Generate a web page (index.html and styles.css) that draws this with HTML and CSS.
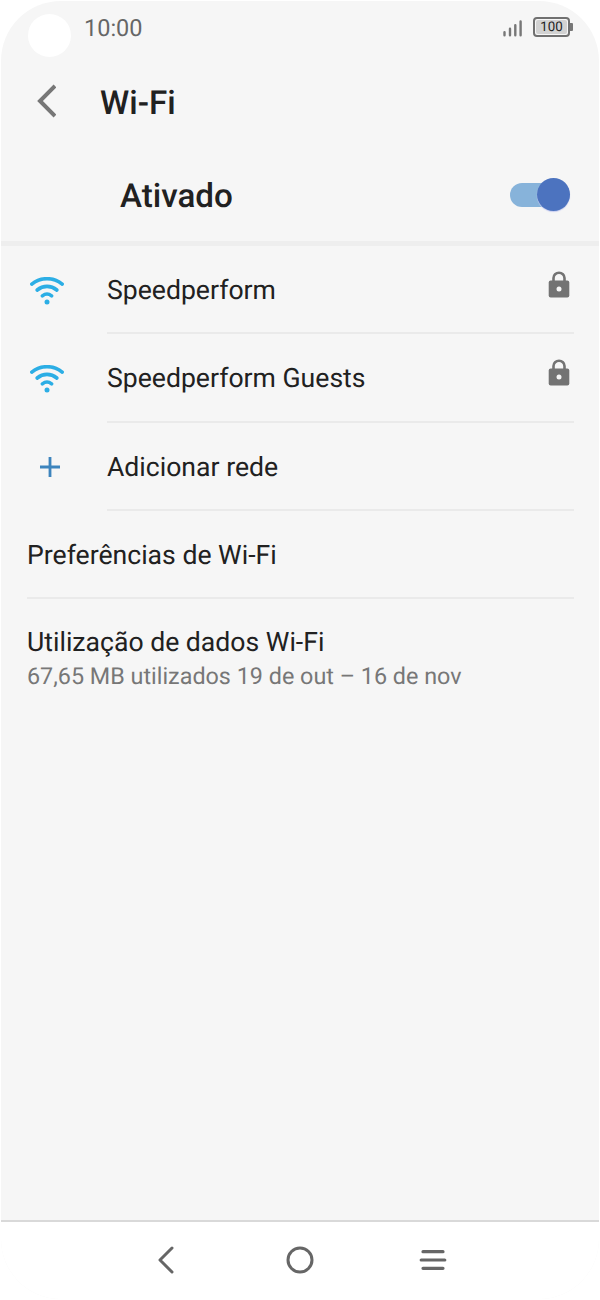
FILE: index.html
```html
<!DOCTYPE html>
<html lang="pt">
<head>
<meta charset="utf-8">
<title>Wi-Fi</title>
<link rel="stylesheet" href="styles.css">
</head>
<body>
<div class="phone">
  <header class="status">
    <span class="camera"></span>
    <span class="clock">10:00</span>
    <svg class="signal" width="20" height="18" viewBox="0 0 20 18" fill="none" stroke="#777" stroke-width="2.4" stroke-linecap="round"><path d="M1.500 12.300V15.300M7 8.800V15.300M12.300 5.300V15.300M17.600 1.500V15.300"/></svg>
    <span class="battery"><span class="charge">100</span></span>
  </header>
  <div class="titlebar">
    <svg class="back" width="20" height="34" viewBox="0 0 20 34" fill="none" stroke="#777" stroke-width="4"><path d="M19 2 4 17 19 32"/></svg>
    <h1 class="title">Wi-Fi</h1>
  </div>
  <div class="master">
    <span class="title">Ativado</span>
    <span class="switch"><span class="thumb"></span></span>
  </div>
  <main class="list">
    <div class="row">
      <svg class="wifi" width="34" height="28" viewBox="0 0 34 28" fill="none" stroke="#2caee5" stroke-width="3.6" stroke-linecap="round"><path d="M1.8 7.1C10.6-.1 23.4-.1 32.2 7.1M7.2 13C13 8.2 21 8.2 26.800 13M12.400 18.800C15.200 16.600 18.800 16.600 21.600 18.800"/><circle cx="17" cy="25" r="2.500" fill="#2caee5" stroke="none"/></svg>
      <div class="cell"><span class="label">Speedperform</span>
        <svg class="lock" width="22" height="28" viewBox="0 0 22 28"><path d="M5.500 11V7a5.500 5.300 0 0 1 11 0v4" fill="none" stroke="#737373" stroke-width="2.600"/><rect x=".7" y="9.500" width="20.600" height="17" rx="2" fill="#737373"/><circle cx="11" cy="18" r="2.500" fill="#f6f6f6"/></svg>
      </div>
    </div>
    <div class="row">
      <svg class="wifi" width="34" height="28" viewBox="0 0 34 28" fill="none" stroke="#2caee5" stroke-width="3.6" stroke-linecap="round"><path d="M1.8 7.1C10.6-.1 23.4-.1 32.2 7.1M7.2 13C13 8.2 21 8.2 26.800 13M12.400 18.800C15.200 16.600 18.800 16.600 21.600 18.800"/><circle cx="17" cy="25" r="2.500" fill="#2caee5" stroke="none"/></svg>
      <div class="cell"><span class="label">Speedperform Guests</span>
        <svg class="lock" width="22" height="28" viewBox="0 0 22 28"><path d="M5.500 11V7a5.500 5.300 0 0 1 11 0v4" fill="none" stroke="#737373" stroke-width="2.600"/><rect x=".7" y="9.500" width="20.600" height="17" rx="2" fill="#737373"/><circle cx="11" cy="18" r="2.500" fill="#f6f6f6"/></svg>
      </div>
    </div>
    <div class="row">
      <svg class="plus" width="20" height="20" viewBox="0 0 20 20" stroke="#3d84bd" stroke-width="2.800"><path d="M10 0V20M0 10H20"/></svg>
      <div class="cell"><span class="label">Adicionar rede</span></div>
    </div>
    <div class="row wide">
      <div class="cell"><span class="label">Preferências de Wi-Fi</span></div>
    </div>
    <div class="usage">
      <span class="label">Utilização de dados Wi-Fi</span>
      <span class="detail">67,65 MB utilizados 19 de out – 16 de nov</span>
    </div>
  </main>
  <nav class="nav">
    <svg width="28" height="28" viewBox="0 0 28 28" fill="none" stroke="#666" stroke-width="3" stroke-linecap="round" stroke-linejoin="round"><path d="M19 2 7 14 19 26"/></svg>
    <svg width="28" height="28" viewBox="0 0 28 28" fill="none" stroke="#666" stroke-width="3"><circle cx="14" cy="14" r="12"/></svg>
    <svg width="28" height="28" viewBox="0 0 28 28" fill="none" stroke="#666" stroke-width="3.200" stroke-linecap="round"><path d="M4 5.700H24M2.200 14H25.800M4 22.300H24"/></svg>
  </nav>
</div>
</body>
</html>
```
FILE: styles.css
```css
* { box-sizing: border-box; }
body {
  margin: 0;
  background: #fff;
  font-family: Roboto, "Liberation Sans", sans-serif;
  text-rendering: geometricPrecision;
  color: #212121;
}
svg { display: block; flex: none; }
.phone {
  display: flex;
  flex-direction: column;
  width: 598px;
  height: 1298px;
  margin: 1px;
  border-radius: 60px;
  background: #f6f6f6;
  overflow: hidden;
}
.status {
  display: flex;
  align-items: flex-start;
  height: 60px;
  padding: 13px 26px 0 27px;
}
.camera { width: 43px; height: 43px; border-radius: 50%; background: #fff; }
.clock { margin: 0 auto 0 13px; font-size: 23.5px; line-height: 28px; color: #666; }
.signal { margin-top: 6px; }
.battery {
  position: relative;
  width: 37px;
  height: 20px;
  margin: 3px 3px 0 10px;
  padding: 1px;
  border: 2px solid #707070;
  border-radius: 4px;
}
.battery::after {
  content: "";
  position: absolute;
  left: 35px;
  top: 4px;
  width: 3px;
  height: 8px;
  border-radius: 0 1px 1px 0;
  background: #777;
}
.charge {
  display: block;
  height: 14px;
  border-radius: 2px;
  background: #d2d2d2;
  font-size: 13.3px;
  line-height: 16px;
  text-align: center;
  color: #222;
}
.titlebar { display: flex; align-items: center; height: 80px; padding-left: 34.5px; }
.title { margin: 0; font-size: 33.2px; font-weight: 500; line-height: 40px; }
.titlebar .title { margin: 6px 0 0 44.5px; }
.master {
  display: flex;
  align-items: center;
  justify-content: space-between;
  height: 105px;
  padding: 9px 29px 0 119px;
  border-bottom: 5px solid #eee;
}
.master .title { margin-top: 2px; }
.switch {
  display: flex;
  align-items: center;
  justify-content: flex-end;
  width: 60px;
  height: 24px;
  margin-bottom: 2px;
  border-radius: 12px;
  background: #87b3da;
}
.thumb {
  flex: none;
  width: 33px;
  height: 33px;
  border-radius: 50%;
  background: #4c73bf;
  box-shadow: 0 1px 1px #c8cdf0;
}
.list { flex: 1; padding: 0 25px 0 26px; }
.row { display: grid; grid-template-columns: 80px 1fr; height: 88.3px; }
.row.wide { grid-template-columns: 1fr; }
.cell {
  display: flex;
  justify-content: space-between;
  border-bottom: 2px solid #eaeaea;
}
.label { font-size: 26.6px; line-height: 32px; white-space: nowrap; }
.cell .label { padding-top: 29px; }
.wifi { margin: 31px 0 0 2.6px; }
.plus { margin: 34px 0 0 13px; }
.lock { margin: 25px 4.2px 0 0; }
.usage { display: flex; flex-direction: column; padding-top: 28px; }
.detail { font-size: 23.35px; line-height: 28px; margin-top: 3px; color: #777; white-space: nowrap; }
.nav {
  display: flex;
  justify-content: center;
  align-items: center;
  gap: 105px;
  height: 79px;
  padding-bottom: 2px;
  border-top: 2px solid #d9d9d9;
  background: #fff;
}
```
